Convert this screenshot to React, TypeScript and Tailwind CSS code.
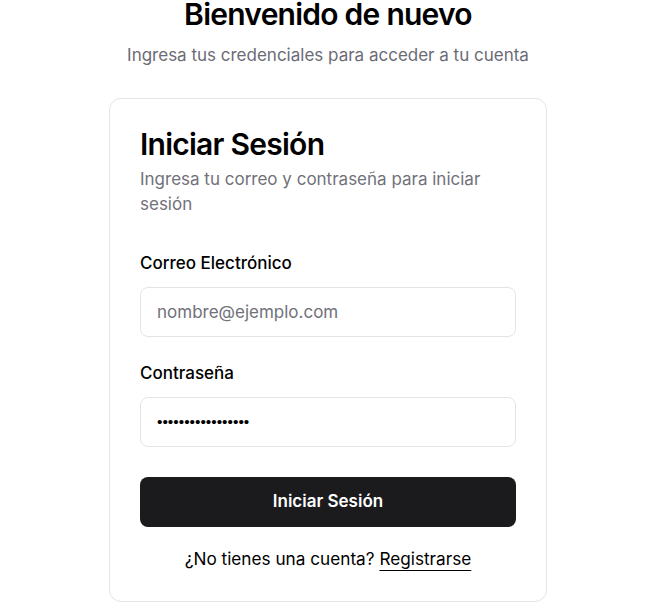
export default function App() {
  return (
    <div
      className="min-h-screen bg-white pl-[10px] overflow-hidden"
      style={{ fontFamily: 'Inter, "Noto Sans", sans-serif' }}
    >
      <div className="flex flex-col items-center mt-[-4px]">
        <h1 className="text-[30px] leading-9 font-semibold text-black tracking-tight">Bienvenido de nuevo</h1>
        <p className="mt-[11px] text-[17px] leading-[25px] text-[#6b6b76]">
          Ingresa tus credenciales para acceder a tu cuenta
        </p>

        <div className="mt-[30px] w-[438px] rounded-xl border border-[#e4e4e7] bg-white px-[30px] pt-[27px] pb-[30px]">
          <h2 className="text-[30px] leading-9 font-semibold text-black tracking-tight">Iniciar Sesión</h2>
          <p className="mt-[5px] text-[17px] leading-[25px] text-[#71717a]">
            Ingresa tu correo y contraseña para iniciar sesión
          </p>

          <form className="mt-[34px] flex flex-col" onSubmit={(e) => e.preventDefault()}>
            <label className="text-[17px] leading-6 font-medium text-black">Correo Electrónico</label>
            <input
              type="email"
              placeholder="nombre@ejemplo.com"
              className="mt-[12px] h-[50px] w-full rounded-lg border border-[#e4e4e7] px-4 text-[17px] text-black placeholder:text-[#71717a] outline-none"
            />

            <label className="mt-[24px] text-[17px] leading-6 font-medium text-black">Contraseña</label>
            <input
              type="password"
              defaultValue="contraseña1234567"
              className="mt-[12px] h-[50px] w-full rounded-lg border border-[#e4e4e7] px-4 text-[15.5px] text-black outline-none"
              style={{ fontFamily: '"Liberation Sans", Arial, sans-serif' }}
            />

            <button
              type="submit"
              className="mt-[30px] h-[50px] w-full rounded-lg bg-[#1b1b1d] text-[17px] font-semibold text-white"
            >
              Iniciar Sesión
            </button>
          </form>

          <p className="mt-[19px] text-center text-[17.2px] leading-[25px] text-black">
            ¿No tienes una cuenta?{' '}
            <a href="#" className="underline underline-offset-[5px] decoration-1">
              Registrarse
            </a>
          </p>
        </div>
      </div>
    </div>
  );
}
